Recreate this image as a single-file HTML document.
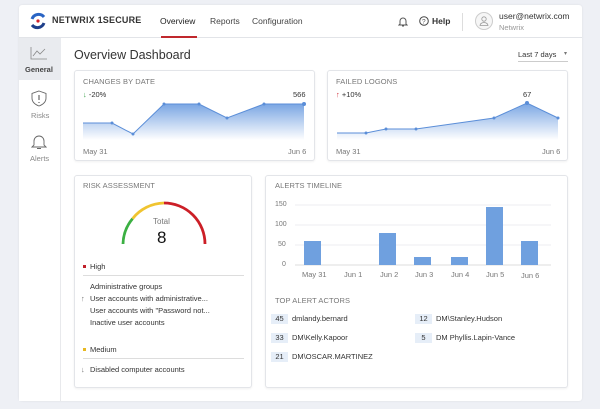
<!DOCTYPE html>
<html><head><meta charset="utf-8"><style>
*{margin:0;padding:0;box-sizing:border-box}
body{width:600px;height:409px;background:#eef0f5;font-family:"Liberation Sans",sans-serif;color:#222;position:relative;overflow:hidden}
.abs{position:absolute}
svg.abs{z-index:2}
.t{z-index:3}
.main{left:19px;top:5px;width:563px;height:396px;background:#fff;border-radius:3px;box-shadow:0 0 2px rgba(0,0,0,.08)}
.hdr{left:19px;top:5px;width:563px;height:33px;border-bottom:1px solid #e2e4e8}
.side{left:19px;top:38px;width:42px;height:363px;border-right:1px solid #e8e9ec;background:#fff}
.card{position:absolute;background:#fff;border:1px solid #e3e5e9;border-radius:3px;box-shadow:0 1px 2px rgba(0,0,0,.06)}
.ttl{position:absolute;font-size:7.5px;color:#777;letter-spacing:.1px;z-index:3}
.t{position:absolute;font-size:8px;color:#333;white-space:nowrap}
.g{color:#777}
.badge{position:absolute;width:17px;height:10px;background:#e6eef8;font-size:7.5px;color:#333;text-align:center;line-height:10px;z-index:3}
</style></head><body>
<div class="abs main"></div>
<div class="abs hdr"></div>
<svg class="abs" style="left:29px;top:12px" width="18" height="18" viewBox="0 0 18 18"><path d="M3 7 A7 7 0 0 1 15 5" stroke="#2a64c4" stroke-width="3" fill="none"/><path d="M15 11 A7 7 0 0 1 3 13" stroke="#1e3f8a" stroke-width="3" fill="none"/><circle cx="9" cy="9" r="1.6" fill="#d0202a"/></svg>
<div class="t" style="left:52px;top:15px;font-size:9px;font-weight:bold;color:#333;letter-spacing:.2px">NETWRIX 1SECURE</div>
<div class="t" style="left:160px;top:16px;font-size:8.5px;color:#222">Overview</div>
<div class="abs" style="left:161px;top:36px;width:36px;height:2px;background:#c0282d"></div>
<div class="t" style="left:210px;top:16px;font-size:8.5px;color:#444">Reports</div>
<div class="t" style="left:252px;top:16px;font-size:8.5px;color:#444">Configuration</div>
<svg class="abs" style="left:398px;top:16px" width="10" height="11" viewBox="0 0 10 11"><path d="M2 8V5a3 3 0 0 1 6 0v3l1 1H1z M4 10h2" stroke="#555" stroke-width="1" fill="none"/></svg>
<svg class="abs" style="left:419px;top:16px" width="10" height="10"><circle cx="5" cy="5" r="4.3" stroke="#444" fill="none"/><text x="3" y="7.5" font-size="6.5" fill="#444" font-family="Liberation Sans">?</text></svg>
<div class="t" style="left:432px;top:16px;font-size:8.5px;font-weight:bold;color:#333">Help</div>
<div class="abs" style="left:462px;top:13px;width:1px;height:18px;background:#ddd"></div>
<div class="abs" style="left:475px;top:12px;width:18px;height:18px;border-radius:50%;border:1px solid #ccc;background:#f6f6f6"></div>
<svg class="abs" style="left:478px;top:15px" width="12" height="12"><circle cx="6" cy="4" r="2.2" stroke="#999" fill="none" stroke-width=".8"/><path d="M2 10.5a4 3 0 0 1 8 0z" stroke="#999" fill="none" stroke-width=".8"/></svg>
<div class="t" style="left:499px;top:11px;font-size:8.5px;color:#333">user@netwrix.com</div>
<div class="t" style="left:499px;top:23px;font-size:7.5px;color:#999">Netwrix</div>

<div class="abs side"></div>
<div class="abs" style="left:19px;top:38px;width:42px;height:42px;background:#e9ebef"></div>
<svg class="abs" style="left:30px;top:46px" width="18" height="14"><path d="M1 1V13H17" stroke="#888" fill="none" stroke-width=".8"/><path d="M3 10L7 5L10 8L15 3" stroke="#888" fill="none" stroke-width=".8"/></svg>
<div class="t" style="left:25px;top:65px;font-size:7.5px;font-weight:bold;color:#444">General</div>
<svg class="abs" style="left:31px;top:90px" width="16" height="17"><path d="M8 1L15 3.5V8c0 4-3 6.5-7 8C4 14.5 1 12 1 8V3.5z" stroke="#666" fill="none" stroke-width=".9"/><path d="M8 5v5M8 12v1" stroke="#666" stroke-width="1.2"/></svg>
<div class="t" style="left:31px;top:111px;font-size:7.5px;color:#888">Risks</div>
<svg class="abs" style="left:31px;top:133px" width="16" height="17"><path d="M3 12V8a5 5 0 0 1 10 0v4l2 2H1z M6 15.5h4" stroke="#666" fill="none" stroke-width=".9"/></svg>
<div class="t" style="left:30px;top:154px;font-size:7.5px;color:#888">Alerts</div>

<div class="t" style="left:74px;top:48px;font-size:12.5px;color:#333">Overview Dashboard</div>
<div class="t" style="left:518px;top:50px;font-size:7.5px;color:#333">Last 7 days</div>
<div class="t" style="left:564px;top:50px;font-size:6px;color:#777">▾</div>
<div class="abs" style="left:518px;top:61px;width:50px;height:1px;background:#ccc"></div>

<div class="card" style="left:74px;top:70px;width:241px;height:91px"></div>
<div class="card" style="left:327px;top:70px;width:241px;height:91px"></div>
<div class="card" style="left:74px;top:175px;width:178px;height:213px"></div>
<div class="card" style="left:265px;top:175px;width:303px;height:213px"></div>

<div class="ttl" style="left:83px;top:77px">CHANGES BY DATE</div>
<div class="t" style="left:83px;top:90px;font-size:7.5px"><span style="color:#3aa24a">↓</span> -20%</div>
<div class="t" style="left:293px;top:90px;font-size:7.5px">566</div>
<svg class="abs" style="left:0;top:0" width="600" height="409">
<defs><linearGradient id="ga" x1="0" y1="0" x2="0" y2="1"><stop offset="0" stop-color="#7aa6e3"/><stop offset="1" stop-color="#ffffff"/></linearGradient></defs>
<path d="M83 123L112 123L133 134L164 104L199 104L227 118L264 104L304 104V140H83Z" fill="url(#ga)"/>
<path d="M83 123L112 123L133 134L164 104L199 104L227 118L264 104L304 104" stroke="#5b8ed8" fill="none" stroke-width="1"/>
<g fill="#5b8ed8"><circle cx="112" cy="123" r="1.5"/><circle cx="133" cy="134" r="1.5"/><circle cx="164" cy="104" r="1.5"/><circle cx="199" cy="104" r="1.5"/><circle cx="227" cy="118" r="1.5"/><circle cx="264" cy="104" r="1.5"/><circle cx="304" cy="104" r="2"/></g>
<path d="M337 133L366 133L386 129L416 129L494 118L527 103L558 118V140H337Z" fill="url(#ga)"/>
<path d="M337 133L366 133L386 129L416 129L494 118L527 103L558 118" stroke="#5b8ed8" fill="none" stroke-width="1"/>
<g fill="#5b8ed8"><circle cx="366" cy="133" r="1.5"/><circle cx="386" cy="129" r="1.5"/><circle cx="416" cy="129" r="1.5"/><circle cx="494" cy="118" r="1.5"/><circle cx="527" cy="103" r="2"/><circle cx="558" cy="118" r="1.5"/></g>
</svg>
<div class="t g" style="left:83px;top:147px;font-size:7.5px">May 31</div>
<div class="t g" style="left:288px;top:147px;font-size:7.5px">Jun 6</div>

<div class="ttl" style="left:336px;top:77px">FAILED LOGONS</div>
<div class="t" style="left:336px;top:90px;font-size:7.5px"><span style="color:#d0303a">↑</span> +10%</div>
<div class="t" style="left:523px;top:90px;font-size:7.5px">67</div>
<div class="t g" style="left:336px;top:147px;font-size:7.5px">May 31</div>
<div class="t g" style="left:542px;top:147px;font-size:7.5px">Jun 6</div>

<div class="ttl" style="left:83px;top:181px">RISK ASSESSMENT</div>
<svg class="abs" style="left:0;top:0" width="600" height="409">
<path d="M123 244A41 41 0 0 1 132.6 218.6" stroke="#3cb043" stroke-width="2.8" fill="none"/>
<path d="M132.6 218.6A41 41 0 0 1 164 203" stroke="#f0c430" stroke-width="2.8" fill="none"/>
<path d="M164 203A41 41 0 0 1 205 244" stroke="#cc1f27" stroke-width="2.8" fill="none"/>
</svg>
<div class="t g" style="left:153px;top:217px;font-size:8px">Total</div>
<div class="t" style="left:157px;top:228px;font-size:17px;color:#111">8</div>
<div class="abs" style="left:83px;top:265px;width:3px;height:3px;background:#c0202a"></div>
<div class="t" style="left:90px;top:262px;font-size:7.5px">High</div>
<div class="abs" style="left:83px;top:275px;width:161px;height:1px;background:#ddd"></div>
<div class="t" style="left:90px;top:282px;font-size:7.5px">Administrative groups</div>
<div class="t g" style="left:81px;top:294px;font-size:7.5px">↑</div>
<div class="t" style="left:90px;top:294px;font-size:7.5px">User accounts with administrative...</div>
<div class="t" style="left:90px;top:306px;font-size:7.5px">User accounts with "Password not...</div>
<div class="t" style="left:90px;top:318px;font-size:7.5px">Inactive user accounts</div>
<div class="abs" style="left:83px;top:348px;width:3px;height:3px;background:#e8b820"></div>
<div class="t" style="left:90px;top:345px;font-size:7.5px">Medium</div>
<div class="abs" style="left:83px;top:358px;width:161px;height:1px;background:#ddd"></div>
<div class="t g" style="left:81px;top:365px;font-size:7.5px">↓</div>
<div class="t" style="left:90px;top:365px;font-size:7.5px">Disabled computer accounts</div>

<div class="ttl" style="left:275px;top:181px">ALERTS TIMELINE</div>
<div class="t g" style="left:275px;top:201px;font-size:7px">150</div>
<div class="t g" style="left:275px;top:221px;font-size:7px">100</div>
<div class="t g" style="left:278px;top:241px;font-size:7px">50</div>
<div class="t g" style="left:282px;top:261px;font-size:7px">0</div>
<svg class="abs" style="left:0;top:0" width="600" height="409">
<g stroke="#eceef2" stroke-width="1"><path d="M295 205H551M295 225H551M295 245H551"/></g>
<path d="M295 265H551" stroke="#ddd"/>
<g fill="#6fa0df"><rect x="304" y="241" width="17" height="24"/><rect x="379" y="233" width="17" height="32"/><rect x="414" y="257" width="17" height="8"/><rect x="451" y="257" width="17" height="8"/><rect x="486" y="207" width="17" height="58"/><rect x="521" y="241" width="17" height="24"/></g>
</svg>
<div class="t g" style="left:302px;top:270px;font-size:7.5px">May 31</div>
<div class="t g" style="left:344px;top:270px;font-size:7.5px">Jun 1</div>
<div class="t g" style="left:380px;top:270px;font-size:7.5px">Jun 2</div>
<div class="t g" style="left:415px;top:270px;font-size:7.5px">Jun 3</div>
<div class="t g" style="left:451px;top:270px;font-size:7.5px">Jun 4</div>
<div class="t g" style="left:486px;top:270px;font-size:7.5px">Jun 5</div>
<div class="t g" style="left:521px;top:271px;font-size:7.5px">Jun 6</div>
<div class="ttl" style="left:275px;top:296px">TOP ALERT ACTORS</div>
<div class="badge" style="left:271px;top:314px">45</div><div class="t" style="left:292px;top:314px;font-size:7.5px">dmlandy.bernard</div>
<div class="badge" style="left:415px;top:314px">12</div><div class="t" style="left:436px;top:314px;font-size:7.5px">DM\Stanley.Hudson</div>
<div class="badge" style="left:271px;top:333px">33</div><div class="t" style="left:292px;top:333px;font-size:7.5px">DM\Kelly.Kapoor</div>
<div class="badge" style="left:415px;top:333px">5</div><div class="t" style="left:436px;top:333px;font-size:7.5px">DM Phyllis.Lapin-Vance</div>
<div class="badge" style="left:271px;top:352px">21</div><div class="t" style="left:292px;top:352px;font-size:7.5px">DM\OSCAR.MARTINEZ</div>
</body></html>
